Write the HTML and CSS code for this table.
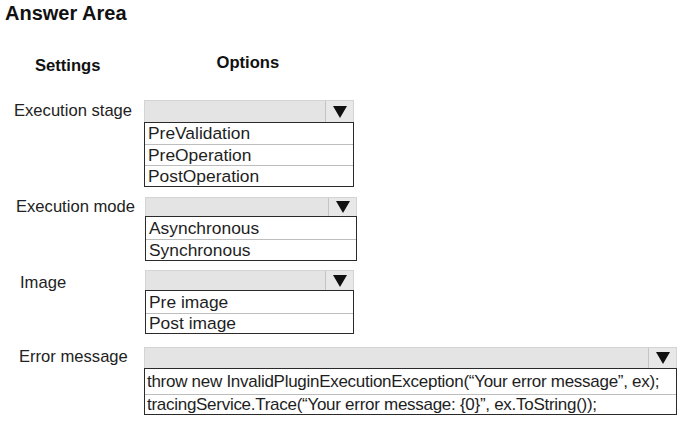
FILE: index.html
```html
<!DOCTYPE html>
<html>
<head>
<meta charset="utf-8">
<link rel="stylesheet" href="styles.css">
</head>
<body>
<div class="page">
  <h1 class="title">Answer Area</h1>
  <div class="heads">
    <span class="head head-settings">Settings</span>
    <span class="head head-options">Options</span>
  </div>

  <div class="row row-stage">
    <div class="label lab-stage">Execution stage</div>
    <div class="control w-stage">
      <div class="select sel-stage"><span class="arrow"><svg width="14" height="12" viewBox="0 0 14 12"><polygon points="0,0 14,0 7,12" fill="#111"/></svg></span></div>
      <ul class="list">
        <li class="opt opt-21">PreValidation</li>
        <li class="opt">PreOperation</li>
        <li class="opt">PostOperation</li>
      </ul>
    </div>
  </div>

  <div class="row row-mode">
    <div class="label lab-mode">Execution mode</div>
    <div class="control w-mode">
      <div class="select sel-mode"><span class="arrow"><svg width="14" height="12" viewBox="0 0 14 12"><polygon points="0,0 14,0 7,12" fill="#111"/></svg></span></div>
      <ul class="list">
        <li class="opt opt-22">Asynchronous</li>
        <li class="opt">Synchronous</li>
      </ul>
    </div>
  </div>

  <div class="row row-image">
    <div class="label lab-image">Image</div>
    <div class="control w-image">
      <div class="select sel-image"><span class="arrow"><svg width="14" height="12" viewBox="0 0 14 12"><polygon points="0,0 14,0 7,12" fill="#111"/></svg></span></div>
      <ul class="list">
        <li class="opt opt-22">Pre image</li>
        <li class="opt opt-19">Post image</li>
      </ul>
    </div>
  </div>

  <div class="row row-error">
    <div class="label lab-error">Error message</div>
    <div class="control w-error">
      <div class="select sel-error"><span class="arrow"><svg width="14" height="12" viewBox="0 0 14 12"><polygon points="0,0 14,0 7,12" fill="#111"/></svg></span></div>
      <ul class="list list-code">
        <li class="opt opt-25">throw new InvalidPluginExecutionException(“Your error message”, ex);</li>
        <li class="opt opt-19">tracingService.Trace(“Your error message: {0}”, ex.ToString());</li>
      </ul>
    </div>
  </div>
</div>
</body>
</html>
```

FILE: styles.css
```css
html, body {
  margin: 0;
  padding: 0;
  background: #fff;
}
body {
  font-family: "Liberation Sans", Arial, sans-serif;
  color: #1a1a1a;
  width: 688px;
  height: 423px;
  overflow: hidden;
}
.page {
  display: flex;
  flex-direction: column;
}
.title {
  margin: 0;
  padding: 2px 0 0 5px;
  font-size: 20px;
  font-weight: bold;
  line-height: 22px;
  color: #111;
}
.heads {
  display: flex;
  margin-top: 28px;
  height: 24px;
  font-weight: bold;
  font-size: 16.6px;
  color: #111;
}
.head-settings {
  margin-left: 35px;
  padding-top: 4px;
}
.head-options {
  margin-left: 116px;
  padding-top: 1px;
}
.row {
  display: flex;
  align-items: flex-start;
}
.row-stage { margin-top: 24px; }
.row-mode { margin-top: 10px; }
.row-image { margin-top: 9px; }
.row-error { margin-top: 13px; }

.label {
  font-size: 16.6px;
  color: #222;
  display: flex;
  align-items: center;
}
.lab-stage { width: 130px; padding-left: 14px; height: 22px; }
.lab-mode { width: 129px; padding-left: 16px; height: 20px; }
.lab-image { width: 125px; padding-left: 20px; height: 26px; }
.lab-error { width: 125px; padding-left: 19px; height: 20px; }

.control {
  display: flex;
  flex-direction: column;
}
.w-stage { width: 210px; }
.w-mode { width: 212px; }
.w-image { width: 209px; }
.w-error { width: 533px; }

.select {
  box-sizing: border-box;
  background: #e4e4e4;
  border: 1px solid #d4d4d4;
  border-bottom: none;
  display: flex;
  justify-content: flex-end;
}
.sel-stage { height: 22px; }
.sel-mode { height: 19px; }
.sel-image { height: 20px; }
.sel-error { height: 21px; }

.arrow {
  width: 27px;
  border-left: 1px solid #c4c4c4;
  background: #e8e8e8;
  display: flex;
  align-items: center;
  justify-content: center;
}

.list {
  list-style: none;
  margin: 0;
  padding: 0;
  border: 1px solid #2a2a2a;
  background: #fff;
}
.opt {
  font-size: 17.4px;
  line-height: 20px;
  padding-left: 3px;
  color: #1e1e1e;
  white-space: nowrap;
  border-top: 1px solid #bdbdbd;
}
.opt:first-child {
  border-top: none;
}
.opt-19 { line-height: 19px; }
.opt-21 { line-height: 21px; }
.opt-22 { line-height: 22px; }
.opt-25 { line-height: 25px; }
.list-code .opt {
  font-size: 17px;
  letter-spacing: -0.28px;
  padding-left: 2px;
}
```
